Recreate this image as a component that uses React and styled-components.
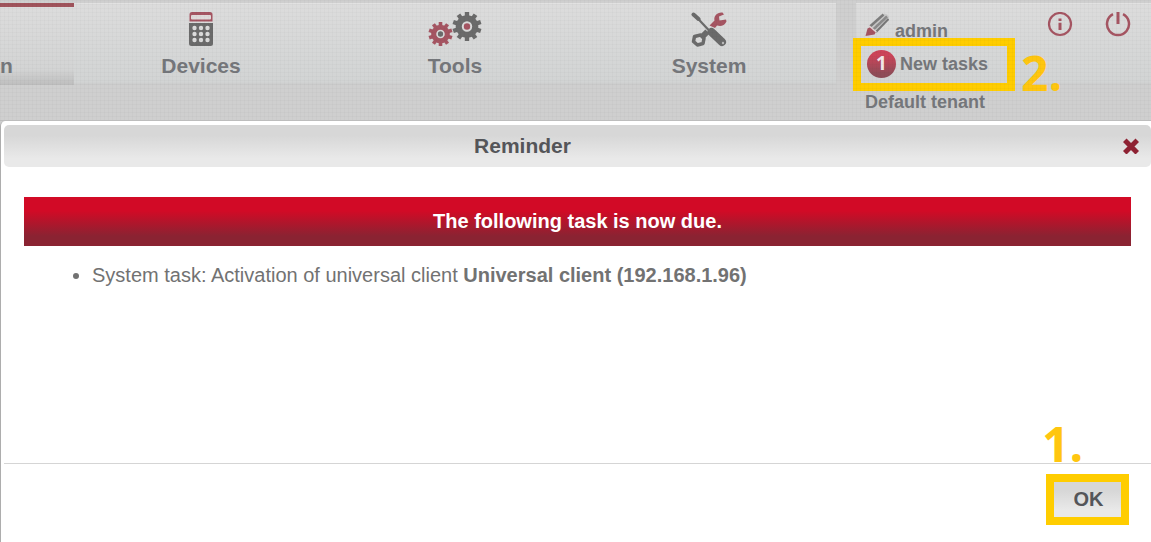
import React from "react";
import styled, { createGlobalStyle } from "styled-components";

const GlobalStyle = createGlobalStyle`
  * {
    box-sizing: border-box;
  }
  body {
    margin: 0;
    background: #cecece;
    font-family: "Liberation Sans", Arial, sans-serif;
    color: #727272;
    overflow-x: hidden;
  }
`;

const Page = styled.div`
  display: flex;
  flex-direction: column;
  min-height: 100vh;
`;

const Header = styled.header`
  position: relative;
  display: grid;
  grid-template-columns: 74px repeat(3, 1fr) 315px;
  height: 121px;
  padding-top: 3px;
  background-color: #cfcfcf;
  border-bottom: 1px solid #bdbdbd;
  &::after {
    content: "";
    position: absolute;
    inset: 0;
    pointer-events: none;
    background-image: linear-gradient(rgba(0, 0, 0, 0.02) 1px, transparent 1px),
      linear-gradient(90deg, rgba(0, 0, 0, 0.02) 1px, transparent 1px);
    background-size: 4px 4px;
  }
`;

const NavItem = styled.a`
  display: flex;
  flex-direction: column;
  align-items: ${(p) => (p.$active ? "flex-start" : "center")};
  height: 82px;
  padding-top: ${(p) => (p.$active ? "5px" : "8px")};
  border-top: ${(p) => (p.$active ? "4px solid #a0545c" : "1px solid #e2e2e2")};
  background: ${(p) =>
    p.$active
      ? "linear-gradient(#dcdcdc, #d3d4d4 80%, #bebebe)"
      : "linear-gradient(#dcdcdc, #d2d4d4 96%, #cbcbcb)"};
  color: #75777b;
  font-size: 21px;
  font-weight: 700;
  line-height: 24px;
  text-decoration: none;
`;

const IconSlot = styled.span`
  display: block;
  height: 36px;
  margin-bottom: 6px;
  svg {
    display: block;
  }
`;

const UserPanel = styled.section`
  margin-left: 20px;
  height: 82px;
  padding: 8px 20px 0 9px;
  border-top: 1px solid #e2e2e2;
  background: linear-gradient(#dcdcdc, #d2d4d4 96%, #cbcbcb);
  color: #75777b;
  font-size: 18px;
  font-weight: 700;
  line-height: 22px;
`;

const UserRow = styled.div`
  display: flex;
  align-items: flex-start;
  height: 34px;
`;

const UserName = styled.span`
  flex: 1;
  padding: 8px 0 0 6px;
`;

const IconButton = styled.button`
  display: block;
  padding: 0;
  border: 0;
  background: none;
  margin-left: 32px;
  svg {
    display: block;
  }
`;

const TasksLink = styled.a`
  position: relative;
  display: flex;
  align-items: center;
  gap: 4px;
  width: 140px;
  height: 36px;
  padding-left: 2px;
  color: inherit;
  text-decoration: none;
`;

const TaskCount = styled.span`
  width: 29px;
  height: 28px;
  border-radius: 50%;
  background: linear-gradient(#cc4459 20%, #8f4c58 85%);
  color: #f2e6e8;
  font-family: "Open Sans", sans-serif;
  font-size: 19px;
  line-height: 26px;
  text-align: center;
`;

const Tenant = styled.div`
  padding-top: 9px;
`;

const Frame = styled.span`
  position: absolute;
  inset: -8px -10px -9px -12px;
  border: 8px solid #ffcd00;
`;

const StepNumber = styled.span`
  position: absolute;
  left: ${(p) => p.$left};
  top: ${(p) => p.$top};
  color: #ffc60f;
  font-family: "Open Sans", sans-serif;
  font-size: 48px;
  font-weight: 700;
  line-height: 48px;
`;

const Dialog = styled.main`
  flex: 1;
  display: flex;
  flex-direction: column;
  padding: 4px 0 0 3px;
  border-left: 1px solid #adadad;
  border-top-left-radius: 5px;
  background: #fff;
`;

const TitleBar = styled.div`
  display: flex;
  align-items: center;
  height: 42px;
  padding-right: 12px;
  border-radius: 5px;
  background: linear-gradient(#d7d7d7 25%, #e9e9e9 80%);
`;

const Title = styled.h1`
  flex: 1;
  margin: 0;
  padding-right: 50px;
  color: #545559;
  font-size: 21px;
  line-height: 24px;
  text-align: center;
`;

const Body = styled.div`
  flex: 1;
  padding: 30px 20px;
`;

const Banner = styled.div`
  padding: 12px;
  background: linear-gradient(#d20a26 28%, #8a2332 80%);
  color: #fff;
  font-size: 20px;
  font-weight: 700;
  line-height: 25px;
  text-align: center;
`;

const TaskList = styled.ul`
  margin: 16px 0 0;
  padding-left: 68px;
  font-size: 20px;
  line-height: 26px;
`;

const Footer = styled.footer`
  display: flex;
  justify-content: flex-end;
  height: 79px;
  padding: 10px 22px 0 0;
  border-top: 1px solid #d5d5d5;
`;

const Confirm = styled.div`
  position: relative;
  height: 51px;
  border: 8px solid #ffcd00;
`;

const OkButton = styled.button`
  width: 67px;
  height: 35px;
  padding: 0 0 0 2px;
  border: 0;
  background: linear-gradient(#d7d7d7 25%, #e9e9e9 80%);
  color: #545559;
  font: 700 20px/35px "Liberation Sans", Arial, sans-serif;
`;

const GRAY = "#6b6b6b";
const RED = "#a55562";

const CalculatorIcon = () => (
  <svg width="26" height="36" viewBox="0 0 26 36">
    <path d="M4 0h18a2.500 2.500 0 0 1 2.500 2.500V9.500h-23V2.500A2.500 2.500 0 0 1 4 0z" fill={RED} />
    <rect x="3" y="3" width="20" height="4.500" rx="1" fill="#e0dada" />
    <path d="M1 11h24v20.500a2.500 2.500 0 0 1-2.500 2.500h-19A2.500 2.500 0 0 1 1 31.500z" fill={GRAY} />
    {[16, 22, 28].map((y) =>
      [6.5, 13, 19.5].map((x) => <circle key={`${x}-${y}`} cx={x} cy={y} r="2.200" fill="#dcdcdc" />)
    )}
  </svg>
);

const Gear = ({ x, y, r, color, core }) => (
  <g transform={`translate(${x} ${y})`}>
    {Array.from({ length: 10 }, (_, i) => (
      <rect
        key={i}
        x={-r * 0.15}
        y={-r}
        width={r * 0.3}
        height={r * 0.4}
        fill={color}
        transform={`rotate(${i * 36})`}
      />
    ))}
    <circle r={r * 0.57} fill="none" stroke={color} strokeWidth={r * 0.42} />
    <circle r={r * 0.22} fill={core} />
  </g>
);

const GearsIcon = () => (
  <svg width="54" height="36" viewBox="0 0 54 36">
    <Gear x={12.5} y={22} r={12} color={RED} core={GRAY} />
    <Gear x={39} y={14.5} r={14.5} color={GRAY} core={RED} />
  </svg>
);

const RepairIcon = () => (
  <svg width="36" height="36" viewBox="0 0 36 36">
    <path d="M4 3.500l15 16" stroke={GRAY} strokeWidth="2.200" />
    <path d="M2.500 2.500l5 4.500" stroke={GRAY} strokeWidth="4" strokeLinecap="round" />
    <path d="M20.500 20L31 30" stroke={GRAY} strokeWidth="8" strokeLinecap="round" />
    <path d="M11 25l5.500-5.500" stroke={GRAY} strokeWidth="6" />
    <path
      d="M3.500 24.500l6-1.500 3.500 3.500-1 5-5.500 1.500-4-3.500z"
      fill="#dcdcdc"
      stroke={GRAY}
      strokeWidth="3.500"
      strokeLinejoin="round"
    />
    <path
      d="M18.500 13.500l5-5C22.500 4 26 0 31.500.5L33 2.500l-5 2 .5 4 6.500-1 .5 2c-2 4.500-6 5-9.500 4L24 16z"
      fill={RED}
    />
    <circle cx="32" cy="31" r="1.200" fill="#bbb" />
  </svg>
);

const PencilIcon = () => (
  <svg width="24" height="25" viewBox="0 0 24 25">
    <path d="M4.500 14L18 2q5-1 6 4L11.500 20z" fill="#c9c9c9" />
    <path d="M5 14.500L18.500 2.500" stroke="#7d7d7d" strokeWidth="2.500" />
    <path d="M8.200 17.500L22 4.500" stroke="#8b8b8b" strokeWidth="2.500" />
    <path d="M11 20L23.500 7" stroke="#777" strokeWidth="2" />
    <path d="M2.500 16.500l3-1.500 5.500 5-1.500 2.500-9 1.500z" fill={RED} />
    <path d="M4 13.800l7.500 6.500" stroke="#e2d6d6" strokeWidth="1.500" />
  </svg>
);

const InfoIcon = () => (
  <svg width="26" height="28" viewBox="0 0 26 28">
    <circle cx="13" cy="12" r="11" fill="none" stroke={RED} strokeWidth="2.200" />
    <path d="M11.500 6.500h3v2.500h-3zM11.500 10.800h3V18h-3z" fill={RED} />
  </svg>
);

const PowerIcon = () => (
  <svg width="26" height="28" viewBox="0 0 26 28">
    <path d="M8 2.200a11 11 0 1 0 10 0" fill="none" stroke={RED} strokeWidth="2.500" />
    <path d="M13 0v12" stroke={RED} strokeWidth="3" />
  </svg>
);

const CloseIcon = () => (
  <svg width="16" height="16" viewBox="0 0 16 16">
    <path d="M3.500 4l9 9M12.500 4l-9 9" stroke="#8e2233" strokeWidth="5" strokeLinecap="square" />
  </svg>
);

const navItems = [
  { label: "Devices", Icon: CalculatorIcon },
  { label: "Tools", Icon: GearsIcon },
  { label: "System", Icon: RepairIcon },
];

const App = () => {
  return (
    <Page>
      <GlobalStyle />
      <Header>
        <NavItem href="#" $active>
          <IconSlot />n
        </NavItem>
        {navItems.map(({ label, Icon }) => (
          <NavItem href="#" key={label}>
            <IconSlot>
              <Icon />
            </IconSlot>
            {label}
          </NavItem>
        ))}
        <UserPanel>
          <UserRow>
            <PencilIcon />
            <UserName>admin</UserName>
            <IconButton aria-label="Information">
              <InfoIcon />
            </IconButton>
            <IconButton aria-label="Log out">
              <PowerIcon />
            </IconButton>
          </UserRow>
          <TasksLink href="#">
            <TaskCount>1</TaskCount>
            New tasks
            <Frame />
            <StepNumber $left="156px" $top="3px">
              2.
            </StepNumber>
          </TasksLink>
          <Tenant>Default tenant</Tenant>
        </UserPanel>
      </Header>
      <Dialog role="dialog" aria-labelledby="dialog-title">
        <TitleBar>
          <Title id="dialog-title">Reminder</Title>
          <IconButton aria-label="Close">
            <CloseIcon />
          </IconButton>
        </TitleBar>
        <Body>
          <Banner>The following task is now due.</Banner>
          <TaskList>
            <li>
              System task: Activation of universal client <b>Universal client (192.168.1.96)</b>
            </li>
          </TaskList>
        </Body>
        <Footer>
          <Confirm>
            <StepNumber $left="-12px" $top="-62px">
              1.
            </StepNumber>
            <OkButton>OK</OkButton>
          </Confirm>
        </Footer>
      </Dialog>
    </Page>
  );
};

export default App;
